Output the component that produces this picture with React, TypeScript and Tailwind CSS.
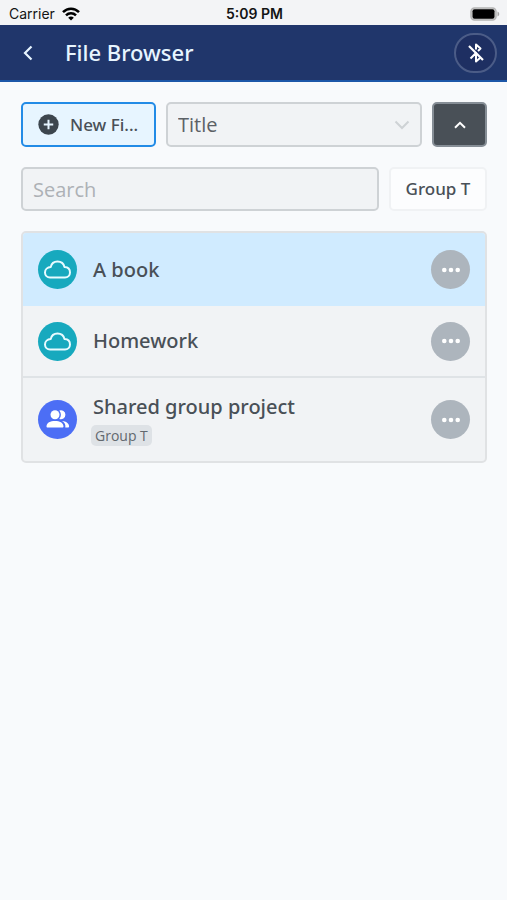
import type { ReactNode } from "react";

type FileKind = "cloud" | "shared";

interface FileEntry {
  title: string;
  kind: FileKind;
  tag?: string;
  selected?: boolean;
}

const files: FileEntry[] = [
  { title: "A book", kind: "cloud", selected: true },
  { title: "Homework", kind: "cloud" },
  { title: "Shared group project", kind: "shared", tag: "Group T" },
];

function StatusBar() {
  return (
    <div className="grid h-[25px] grid-cols-3 items-center bg-[#f3f4f6] pr-[7px] pl-[9px] pt-[2px] font-['Inter','Liberation_Sans',sans-serif] text-sm leading-5 text-[#141414]">
      <div className="flex items-center gap-[7px]">
        <span>Carrier</span>
        <svg width="18" height="14" viewBox="0 0 18 14" fill="none" stroke="#000" strokeWidth="2.5" aria-hidden="true">
          <path d="M1 5.2C5.5.6 12.5.6 17 5.2" />
          <path d="M4 8.3C6.8 5.5 11.2 5.5 14 8.3" />
          <path d="M9 13.5 6.2 10.7C7.7 9.2 10.3 9.2 11.8 10.7Z" fill="#000" stroke="none" />
        </svg>
      </div>
      <span className="text-center font-semibold">5:09 PM</span>
      <svg className="justify-self-end" width="30" height="14" viewBox="0 0 30 14" aria-hidden="true">
        <rect x="1" y="1" width="25" height="12" rx="3.5" fill="#d5d5d5" stroke="#b4b4b4" strokeWidth="1.5" />
        <rect x="2.5" y="2.2" width="22" height="9.6" rx="2" fill="#000" />
        <path d="M27.5 4.5C29.8 5.2 29.8 8.8 27.5 9.5Z" fill="#a5a5a5" />
      </svg>
    </div>
  );
}

function Header() {
  return (
    <header className="flex h-[57px] items-center border-b-2 border-[#1c57a8] bg-[#20366b] pr-[10px] pl-4">
      <button type="button" aria-label="Back" className="flex size-6 items-center justify-center">
        <svg width="10" height="16" viewBox="0 0 10 16" fill="none" stroke="#e7f5ff" strokeWidth="2.2" aria-hidden="true">
          <path d="M8.5 1.5 2 8l6.5 6.5" />
        </svg>
      </button>
      <h1 className="ml-[25px] flex-1 pb-[2px] font-['Noto_Sans','Open_Sans',sans-serif] text-[22px] leading-7 font-medium text-[#e7f5ff]">File Browser</h1>
      <button
        type="button"
        aria-label="Bluetooth disconnected"
        className="flex h-10 w-[43px] items-center justify-center rounded-full border-2 border-[#4b5c87] bg-[#1e2f62]"
      >
        <svg width="20" height="22" viewBox="0 0 20 22" fill="none" stroke="#fff" strokeWidth="2" strokeLinejoin="round" aria-hidden="true">
          <path d="M3 4 17 18" strokeWidth="2.2" />
          <path d="M4.5 16.5 10 11v8.500l4-3.500M10 7.500V2.500l4.500 4-2.500 2.500" />
        </svg>
      </button>
    </header>
  );
}

function Toolbar() {
  return (
    <form className="flex flex-col gap-5" onSubmit={(event) => event.preventDefault()}>
      <div className="flex gap-[10px]">
        <button
          type="button"
          className="flex h-[45px] w-[135px] items-center gap-[11px] rounded-[5px] border-2 border-[#228be6] bg-[#e7f5ff] pl-[15px] font-['Noto_Sans','Open_Sans',sans-serif] text-[17px] leading-6 font-medium text-[#495057]"
        >
          <svg width="21" height="21" viewBox="0 0 20 20" aria-hidden="true">
            <circle cx="10" cy="10" r="9.7" fill="#3d464e" />
            <path d="M10 5.5v9M5.5 10h9" stroke="#e7f5ff" strokeWidth="1.9" />
          </svg>
          <span>New Fi...</span>
        </button>
        <div className="relative flex-1">
          <select
            aria-label="Sort by"
            className="h-[45px] w-full appearance-none rounded-[5px] border-2 border-[#ced2d5] bg-[#f1f3f5] pl-[10px] text-xl text-[#5c6166]"
          >
            <option>Title</option>
          </select>
          <svg className="pointer-events-none absolute top-[18px] right-3" width="16" height="10" viewBox="0 0 16 10" fill="none" stroke="#ced2d5" strokeWidth="2" aria-hidden="true">
            <path d="M1.5 1.5 8 8l6.5-6.5" />
          </svg>
        </div>
        <button
          type="button"
          aria-label="Sort ascending"
          className="flex h-[45px] w-[55px] items-center justify-center rounded-[5px] border-2 border-[#868e96] bg-[#495057]"
        >
          <svg width="12" height="8" viewBox="0 0 12 8" fill="none" stroke="#fff" strokeWidth="2" aria-hidden="true">
            <path d="M1 6.8 6 1.8l5 5" />
          </svg>
        </button>
      </div>
      <div className="flex gap-[10px]">
        <input
          type="search"
          aria-label="Search"
          placeholder="Search"
          className="h-[44px] min-w-0 flex-1 rounded-[5px] border-2 border-[#ced2d5] bg-[#f1f3f5] px-[10px] text-xl text-[#495057] placeholder:text-[#adb1b5]"
        />
        <button
          type="button"
          className="h-[44px] w-[98px] rounded-[5px] border-2 border-[#f0f2f4] bg-[#fcfdfe] font-['Noto_Sans','Open_Sans',sans-serif] text-[17px] leading-6 font-medium text-[#495057]"
        >
          Group T
        </button>
      </div>
    </form>
  );
}

function Badge({ kind }: { kind: FileKind }) {
  const icons: Record<FileKind, ReactNode> = {
    cloud: (
      <svg width="29" height="21" viewBox="0 0 29 21" fill="none" stroke="#e7fbff" strokeWidth="2" strokeLinejoin="round" aria-hidden="true">
        <path d="M7 18.500h15a5 5 0 0 0 5-5c0-3-2-5.200-5.500-5.400C20.700 4.600 18 2.500 14.500 2.500S8.500 4.600 7.700 8.100C4.500 8.300 2 10.600 2 13.500a5 5 0 0 0 5 5Z" />
      </svg>
    ),
    shared: (
      <svg width="25" height="25" viewBox="0 0 25 25" fill="#fff" aria-hidden="true">
        <circle cx="10" cy="7.7" r="4.5" />
        <path d="M14.3 3.500a4.500 4.500 0 1 1 0 8.400a6.300 6.300 0 0 0 0-8.400Z" />
        <path d="M10 14c-4.800 0-8.300 1.800-8.500 5.200-.1.900.4 1.400 1.200 1.400h14.600c.8 0 1.300-.5 1.200-1.400C18.300 15.800 14.800 14 10 14Z" />
        <path d="M17 14.100c4.300.4 7 2.300 7.100 5.200 0 .8-.5 1.300-1.200 1.300h-2.600c.5-2.900-.6-4.900-3.300-6.500Z" />
      </svg>
    ),
  };
  return (
    <span className={`flex size-[39px] shrink-0 items-center justify-center rounded-full ${kind === "cloud" ? "bg-[#17a9be]" : "bg-[#4c6ef5]"}`}>
      {icons[kind]}
    </span>
  );
}

function FileRow({ file }: { file: FileEntry }) {
  return (
    <li
      className={`flex items-center px-[15px] ${file.tag ? "h-[83px]" : "h-[72px]"} ${file.selected ? "h-[73px] bg-[#d0ebff]" : "border-[#dfe3e6] not-last:border-b-2"}`}
    >
      <Badge kind={file.kind} />
      <div className="ml-4 flex min-w-0 flex-1 flex-col items-start">
        <span className="font-['Noto_Sans','Open_Sans',sans-serif] text-xl leading-[26px] font-medium text-[#495057]">{file.title}</span>
        {file.tag && (
          <span className="-ml-[2px] mt-[5px] rounded-[5px] bg-[#dee2e6] px-1 text-sm leading-[21px] text-[#62686e]">{file.tag}</span>
        )}
      </div>
      <button
        type="button"
        aria-label={`Options for ${file.title}`}
        className="flex size-[39px] shrink-0 items-center justify-center rounded-full bg-[#adb5bd]"
      >
        <svg width="20" height="6" viewBox="0 0 20 6" fill="#fff" aria-hidden="true">
          <circle cx="3.3" cy="3" r="2.3" />
          <circle cx="10" cy="3" r="2.3" />
          <circle cx="16.7" cy="3" r="2.3" />
        </svg>
      </button>
    </li>
  );
}

export default function App() {
  return (
    <div className="min-h-screen bg-[#f8fafc] font-['Open_Sans','Noto_Sans',sans-serif]">
      <StatusBar />
      <Header />
      <main className="flex flex-col gap-5 px-5 pt-5 pl-[21px]">
        <Toolbar />
        <ul className="overflow-hidden rounded-[5px] border-2 border-[#e0e2e4] bg-[#f1f3f5]">
          {files.map((file) => (
            <FileRow key={file.title} file={file} />
          ))}
        </ul>
      </main>
    </div>
  );
}
